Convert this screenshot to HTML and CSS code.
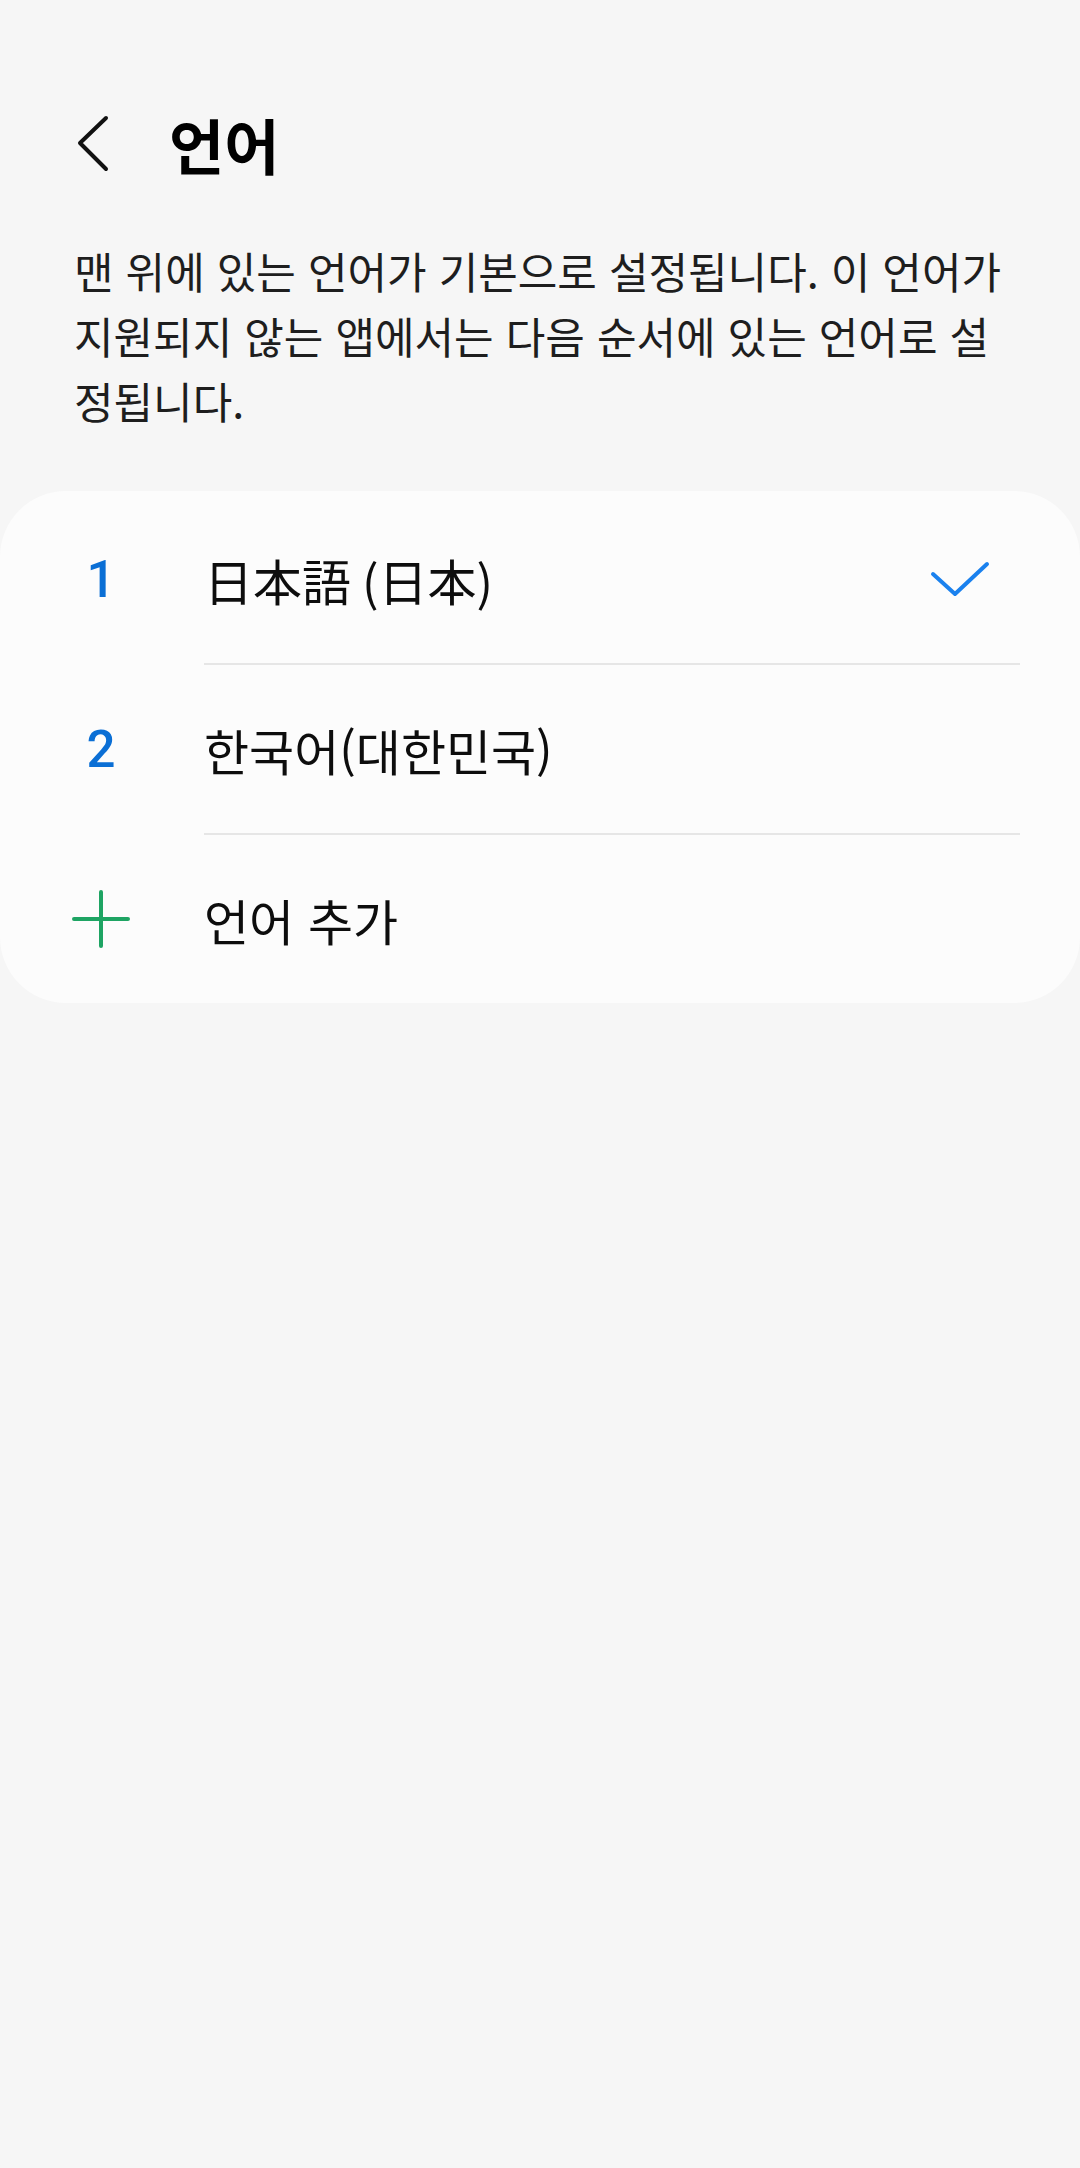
FILE: index.html
```html
<!DOCTYPE html>
<html lang="ko">
<head>
<meta charset="utf-8">
<title>언어</title>
<link rel="stylesheet" href="styles.css">
</head>
<body>
<div class="screen">
  <header class="appbar">
    <svg class="back" width="44" height="64" viewBox="0 0 44 64" aria-hidden="true">
      <path d="M36 6 L10 31 L36 57" fill="none" stroke="#111" stroke-width="4" stroke-linecap="round" stroke-linejoin="round"/>
    </svg>
    <h1 class="title">언어</h1>
  </header>
  <p class="desc">맨 위에 있는 언어가 기본으로 설정됩니다. 이 언어가 지원되지 않는 앱에서는 다음 순서에 있는 언어로 설정됩니다.</p>
  <section class="card">
    <div class="row">
      <div class="lead"><span class="num">1</span></div>
      <div class="label" lang="ja">日本語 (日本)</div>
      <svg class="check" width="64" height="40" viewBox="0 0 64 40" aria-hidden="true">
        <path d="M5 15 L27 35 L59 5" fill="none" stroke="#1a81ee" stroke-width="4" stroke-linecap="round" stroke-linejoin="round"/>
      </svg>
    </div>
    <div class="divider"></div>
    <div class="row">
      <div class="lead"><span class="num">2</span></div>
      <div class="label">한국어(대한민국)</div>
    </div>
    <div class="divider"></div>
    <div class="row">
      <div class="lead">
        <svg class="plus" width="58" height="58" viewBox="0 0 58 58" aria-hidden="true">
          <path d="M29 2 V56 M2 29 H56" fill="none" stroke="#1ea463" stroke-width="4" stroke-linecap="round"/>
        </svg>
      </div>
      <div class="label">언어 추가</div>
    </div>
  </section>
</div>
</body>
</html>
```

FILE: styles.css
```css
html, body {
  margin: 0;
  padding: 0;
  background: #f6f6f6;
}

body {
  font-family: "Noto Sans CJK KR", "Noto Sans", sans-serif;
  color: #111;
}

.screen {
  width: 1080px;
  min-height: 2168px;
  background: #f6f6f6;
}

.appbar {
  display: flex;
  align-items: center;
  height: 100px;
  margin-top: 94px;
  padding-left: 70px;
}

.back {
  display: block;
  flex: none;
}

.title {
  margin: 0 0 0 55px;
  font-size: 60px;
  font-weight: 700;
  line-height: 1;
  color: #000;
}

.desc {
  margin: 44px 0 0;
  padding: 0 68px 0 74px;
  font-size: 43px;
  line-height: 65px;
  color: #1e1e1e;
}

.card {
  margin-top: 58px;
  background: #fcfcfc;
  border-radius: 66px;
  padding-top: 4px;
}

.row {
  display: flex;
  align-items: center;
  height: 168px;
  padding-right: 60px;
}

.lead {
  flex: none;
  width: 202px;
  display: flex;
  justify-content: center;
  align-items: center;
}

.num {
  font-family: Roboto, "Noto Sans", sans-serif;
  font-weight: 500;
  font-size: 51px;
  line-height: 1;
  color: #0b6fd5;
}

.label {
  flex: 1;
  font-size: 49px;
  line-height: 1;
  color: #0d0d0d;
  padding-left: 2px;
}

.label:lang(ja) {
  font-family: "Noto Sans CJK JP", "Noto Sans CJK KR", sans-serif;
}

.check {
  display: block;
  flex: none;
  margin-right: 28px;
}

.plus {
  display: block;
}

.divider {
  height: 2px;
  margin: 0 60px 0 204px;
  background: #e6e6e6;
}
```
